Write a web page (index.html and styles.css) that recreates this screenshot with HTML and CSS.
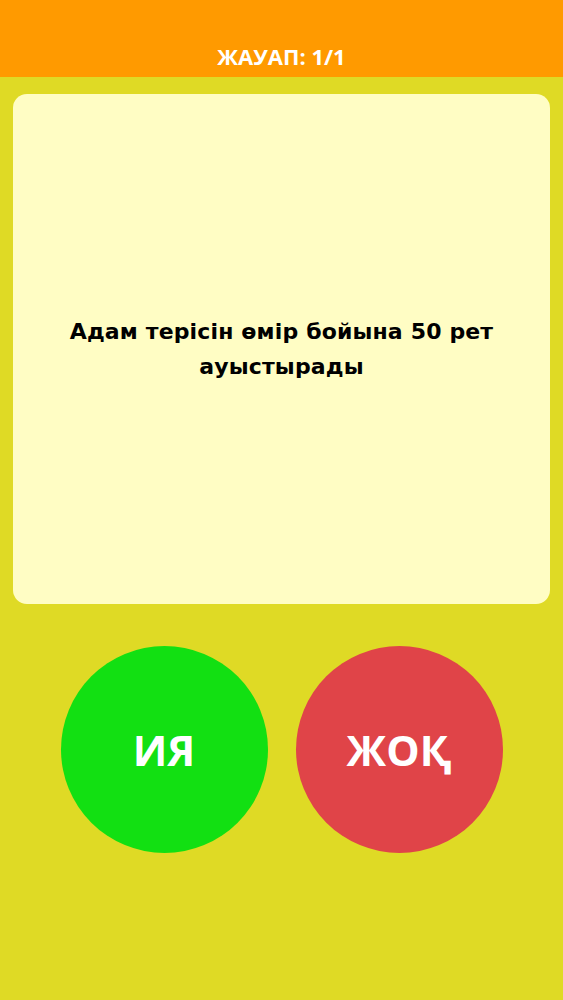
FILE: index.html
```html
<!DOCTYPE html>
<html lang="kk">
<head>
<meta charset="utf-8">
<link rel="stylesheet" href="styles.css">
</head>
<body>
<div class="screen">
  <header class="topbar"><span class="title">ЖАУАП: 1/1</span></header>
  <main class="content">
    <section class="card">
      <p class="question">Адам терісін өмір бойына 50 рет ауыстырады</p>
    </section>
    <div class="buttons">
      <button class="circle yes">ИЯ</button>
      <button class="circle no">ЖОҚ</button>
    </div>
  </main>
</div>
</body>
</html>
```
FILE: styles.css
```css
html, body {
  margin: 0;
  padding: 0;
}
body {
  font-family: "Open Sans", "Noto Sans", sans-serif;
  background: #dfda25;
}
.screen {
  width: 563px;
  height: 1000px;
  display: flex;
  flex-direction: column;
  background: #dfda25;
}
.topbar {
  height: 77px;
  background: #ff9a00;
  display: flex;
  align-items: flex-end;
  justify-content: center;
  box-sizing: border-box;
  padding-bottom: 8px;
}
.title {
  color: #fff;
  font-weight: 700;
  font-size: 22px;
  line-height: 26px;
}
.content {
  display: flex;
  flex-direction: column;
  padding: 17px 13px 0 13px;
}
.card {
  height: 510px;
  background: #fffdc4;
  border-radius: 14px;
  display: flex;
  align-items: center;
  justify-content: center;
  padding: 0 30px;
}
.question {
  margin: 0;
  text-align: center;
  font-family: "DejaVu Sans", sans-serif;
  font-size: 22px;
  font-weight: 700;
  letter-spacing: 0.15px;
  line-height: 35px;
  color: #000;
}
.buttons {
  margin-top: 42px;
  display: flex;
  justify-content: center;
  gap: 28px;
}
.circle {
  width: 207px;
  height: 207px;
  border-radius: 50%;
  border: none;
  padding: 0;
  color: #fff;
  font-family: "Open Sans", "Noto Sans", sans-serif;
  font-weight: 700;
  font-size: 42px;
  display: flex;
  align-items: center;
  justify-content: center;
}
.yes { background: #12e012; }
.no { background: #e04448; }
```
